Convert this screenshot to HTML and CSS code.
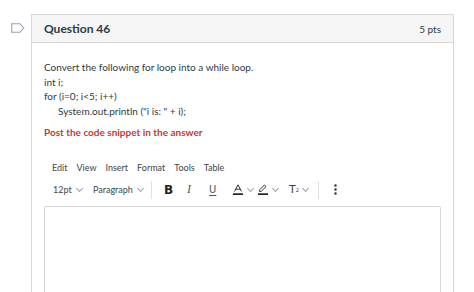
FILE: index.html
```html
<!DOCTYPE html>
<html lang="en">
<head>
    <meta charset="UTF-8">
    <title>Question 46</title>
    <link rel="stylesheet" href="styles.css">
</head>
<body>
    <div class="question-row">
        <div class="flag">
            <svg width="14" height="10" viewBox="0 0 14 10">
                <path d="M0.75 0.75 H9 L12.8 5 L9 9.25 H0.75 Z" fill="none" stroke="#8fa4b8" stroke-width="1.1"/>
            </svg>
        </div>
        <div class="card">
            <div class="card-header">
                <span class="title">Question 46</span>
                <span class="points">5 pts</span>
            </div>
            <div class="card-body">
                <div class="question-text">
                    <p>Convert the following for loop into a while loop.<br>
                    int i;<br>
                    for (i=0; i&lt;5; i++)<br>
                    <span class="indent">System.out.println ("i is: " + i);</span></p>
                    <p class="note">Post the code snippet in the answer</p>
                </div>

                <div class="editor">
                    <div class="menubar">
                        <span>Edit</span>
                        <span>View</span>
                        <span>Insert</span>
                        <span>Format</span>
                        <span>Tools</span>
                        <span>Table</span>
                    </div>
                    <div class="toolbar">
                        <span class="tool size">12pt <i class="chev"></i></span>
                        <span class="tool block">Paragraph <i class="chev"></i></span>
                        <span class="sep"></span>
                        <span class="tool bold">B</span>
                        <span class="tool italic">I</span>
                        <span class="tool under">U</span>
                        <span class="tool color">
                            <svg width="10" height="11" viewBox="0 0 10 11">
                                <path d="M1.5 7.5 L5 0.8 L8.5 7.5 M2.8 5.2 H7.2" fill="none" stroke="#333" stroke-width="1"/>
                                <rect x="0" y="9.3" width="10" height="1.7" fill="#222"/>
                            </svg>
                            <i class="chev"></i>
                        </span>
                        <span class="tool marker">
                            <svg width="10" height="11" viewBox="0 0 10 11">
                                <path d="M1.5 7.5 L1.8 5.6 L6.4 1 L8 2.6 L3.4 7.2 Z" fill="none" stroke="#333" stroke-width="1"/>
                                <rect x="0" y="9.3" width="10" height="1.7" fill="#222"/>
                            </svg>
                            <i class="chev"></i>
                        </span>
                        <span class="tool sup">T<sup>2</sup><i class="chev"></i></span>
                        <span class="sep wide"></span>
                        <span class="tool more">
                            <svg width="3" height="11" viewBox="0 0 3 11">
                                <circle cx="1.5" cy="1.5" r="1.2" fill="#333"/>
                                <circle cx="1.5" cy="5.5" r="1.2" fill="#333"/>
                                <circle cx="1.5" cy="9.5" r="1.2" fill="#333"/>
                            </svg>
                        </span>
                    </div>
                    <div class="edit-area"></div>
                </div>
            </div>
        </div>
    </div>
</body>
</html>
```

FILE: styles.css
```css
body {
    margin: 0;
    padding-top: 14px;
    height: 292px;
    box-sizing: border-box;
    background-color: #fff;
    color: #2d3b45;
    font-family: Lato, "Open Sans", sans-serif;
    overflow: hidden;
}

.question-row {
    display: flex;
    align-items: flex-start;
}

.flag {
    width: 31px;
    padding-top: 9px;
    padding-left: 4px;
    display: flex;
    justify-content: center;
    box-sizing: border-box;
}

.card {
    width: 423px;
    height: 278px;
    overflow: hidden;
    border: 1px solid #d7d7d7;
    border-bottom: none;
    box-sizing: border-box;
}

.card-header {
    display: flex;
    justify-content: space-between;
    align-items: center;
    height: 27px;
    padding: 0 12px;
    background-color: #f5f5f5;
    border-bottom: 1px solid #d7d7d7;
}

.title {
    font-size: 12px;
    font-weight: bold;
    color: #2d3b45;
}

.points {
    font-size: 10px;
    color: #2d3b45;
}

.card-body {
    padding: 17px 12px 0 12px;
}

.question-text {
    font-size: 10px;
    line-height: 14.7px;
    color: #2d3b45;
}

.question-text p {
    margin: 0;
}

.indent {
    padding-left: 14px;
}

.question-text .note {
    color: #c23c2f;
    font-weight: bold;
    margin-top: 6px;
}

.editor {
    margin-top: 20px;
}

.menubar {
    display: flex;
    gap: 9px;
    padding-left: 8px;
    font-size: 9px;
    color: #3d454c;
    height: 16px;
    align-items: center;
}

.toolbar {
    display: flex;
    align-items: center;
    height: 22px;
    margin-top: 3px;
    padding-left: 9px;
    font-size: 9px;
    color: #3d454c;
}

.tool {
    display: flex;
    align-items: center;
    gap: 5px;
    flex-shrink: 0;
}

.size { width: 40px; }
.block { width: 58px; }
.bold { width: 23px; }
.italic { width: 22px; }
.under { width: 24px; }
.color { width: 25px; }
.marker { width: 31px; }
.sup { width: 29px; }

.chev {
    width: 4px;
    height: 4px;
    border-right: 1px solid #9aa1a7;
    border-bottom: 1px solid #9aa1a7;
    transform: rotate(45deg);
    margin-top: -3px;
}

.sep {
    width: 1px;
    height: 18px;
    background-color: #dde1e4;
    margin-right: 12px;
    flex-shrink: 0;
}

.sep.wide {
    margin-right: 15px;
}

.bold {
    font-family: "DejaVu Sans", sans-serif;
    font-weight: bold;
    font-size: 12px;
    color: #222;
}

.italic {
    font-family: "Liberation Serif", serif;
    font-style: italic;
    font-size: 12px;
    color: #555;
}

.under {
    font-family: "DejaVu Sans", sans-serif;
    font-size: 10px;
    text-decoration: underline;
    text-underline-offset: 2px;
    color: #555;
}

.sup {
    font-family: "DejaVu Sans", sans-serif;
    font-size: 11px;
    color: #444;
    gap: 0;
}

.sup sup {
    font-size: 5px;
    margin-right: 4px;
}

.edit-area {
    margin-top: 5px;
    height: 120px;
    border: 1px solid #d7d7d7;
    border-radius: 2px;
}
```
